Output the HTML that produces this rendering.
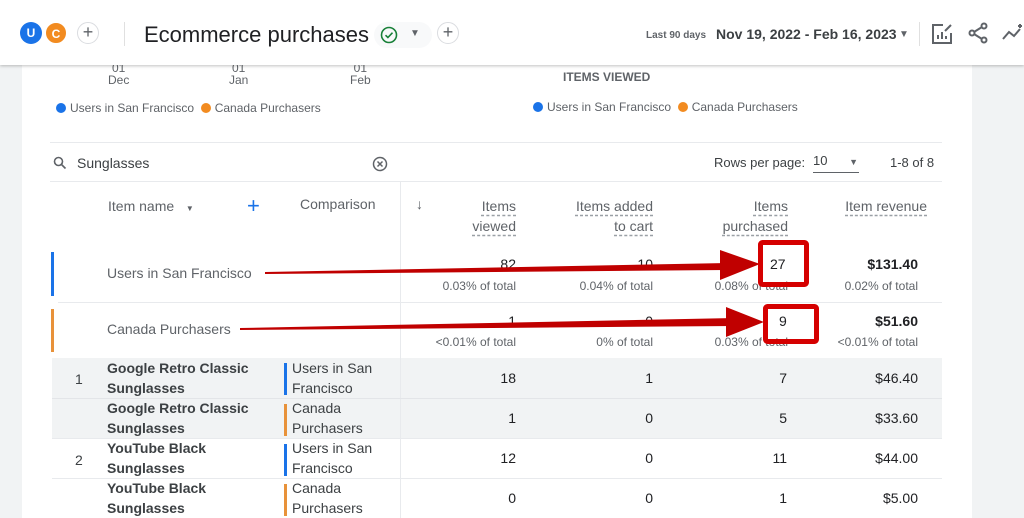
<!DOCTYPE html>
<html><head><meta charset="utf-8"><style>
*{margin:0;padding:0;box-sizing:border-box}
body{width:1024px;height:518px;overflow:hidden;background:#f1f3f4;font-family:"Liberation Sans",Arial,sans-serif;color:#3c4043;position:relative}
.abs{position:absolute}
#hdr{left:0;top:0;width:1024px;height:65px;background:#fff;box-shadow:0 1px 3px rgba(0,0,0,.25);z-index:5}
#card{left:22px;top:65px;width:950px;height:453px;background:#fff}
.t{position:absolute;white-space:nowrap}
.sm{font-size:12px;color:#5f6368}
.r{text-align:right}
.hl{position:absolute;height:1px;background:#e8eaed}
.dot{display:inline-block;width:10px;height:10px;border-radius:50%;vertical-align:-1px;margin-right:4px}
.bar{position:absolute;width:3px}
.b{font-weight:bold;color:#3c4043;font-size:14px;line-height:20px}
.c{font-size:14px;line-height:20px;color:#3c4043}
.n{font-size:14px;color:#202124;text-align:right;width:80px}
.u{text-decoration:underline dashed #9aa0a6;text-underline-offset:4px}
</style></head><body>
<div id="hdr" class="abs">
 <div class="abs" style="left:20px;top:22px;width:22px;height:22px;border-radius:50%;background:#1a73e8;color:#fff;font-size:12px;font-weight:bold;text-align:center;line-height:22px">U</div>
 <div class="abs" style="left:45px;top:22px;width:22px;height:22px;border-radius:50%;background:#f28b20;color:#fff;font-size:12px;font-weight:bold;text-align:center;line-height:22px;border:1px solid #fff">C</div>
 <div class="abs" style="left:77px;top:22px;width:22px;height:22px;border-radius:50%;border:1px solid #dadce0;text-align:center;line-height:19px;font-size:18px;color:#5f6368">+</div>
 <div class="abs" style="left:124px;top:22px;width:1px;height:24px;background:#e0e0e0"></div>
 <div class="t" style="left:144px;top:22px;font-size:22px;color:#202124">Ecommerce purchases</div>
 <div class="abs" style="left:374px;top:22px;width:58px;height:26px;border-radius:13px;background:#f8f9fa"></div>
 <svg class="abs" style="left:380px;top:26px" width="18" height="18" viewBox="0 0 18 18"><circle cx="9" cy="9" r="7.5" fill="none" stroke="#188038" stroke-width="1.6"/><path d="M5.5 9.2l2.4 2.3 4.6-4.8" fill="none" stroke="#188038" stroke-width="1.6"/></svg>
 <div class="t" style="left:410px;top:28px;font-size:10px;color:#5f6368">▼</div>
 <div class="abs" style="left:437px;top:22px;width:22px;height:22px;border-radius:50%;border:1px solid #dadce0;text-align:center;line-height:19px;font-size:18px;color:#5f6368">+</div>
 <div class="t" style="left:646px;top:30px;font-size:10px;color:#5f6368;font-weight:bold">Last 90 days</div>
 <div class="t" style="left:716px;top:26px;font-size:14px;color:#3c4043;font-weight:bold">Nov 19, 2022 - Feb 16, 2023</div>
 <div class="t" style="left:899px;top:29px;font-size:10px;color:#5f6368">▼</div>
 <div class="abs" style="left:919px;top:22px;width:1px;height:24px;background:#e0e0e0"></div>
 <svg class="abs" style="left:931px;top:23px" width="22" height="22" viewBox="0 0 22 22" fill="none" stroke="#5f6368" stroke-width="2"><path d="M12 2H2v18h18V10"/><path d="M7 16v-4M11 16V9M15 16v-3"/><path d="M14 8l6-6"/></svg>
 <svg class="abs" style="left:967px;top:22px" width="22" height="22" viewBox="0 0 22 22" fill="none" stroke="#5f6368" stroke-width="2"><circle cx="17" cy="4" r="2.5"/><circle cx="5" cy="11" r="2.5"/><circle cx="17" cy="18" r="2.5"/><path d="M7 10l8-5M7 12l8 5"/></svg>
 <svg class="abs" style="left:1002px;top:22px" width="22" height="22" viewBox="0 0 22 22" fill="none" stroke="#5f6368" stroke-width="2"><path d="M1 17l6-7 5 4 6-7"/><path d="M18 2v4M16 4h4"/></svg>
</div>
<div id="card" class="abs"></div>
<div class="t sm" style="left:108px;top:62px;line-height:12px;text-align:center">01<br>Dec</div>
<div class="t sm" style="left:229px;top:62px;line-height:12px;text-align:center">01<br>Jan</div>
<div class="t sm" style="left:350px;top:62px;line-height:12px;text-align:center">01<br>Feb</div>
<div class="t" style="left:563px;top:70px;font-size:12px;font-weight:bold;color:#5f6368">ITEMS VIEWED</div>
<div class="t sm" style="left:56px;top:101px"><span class="dot" style="background:#1a73e8"></span>Users in San Francisco &nbsp;<span class="dot" style="background:#f28b20"></span>Canada Purchasers</div>
<div class="t sm" style="left:533px;top:100px"><span class="dot" style="background:#1a73e8"></span>Users in San Francisco &nbsp;<span class="dot" style="background:#f28b20"></span>Canada Purchasers</div>
<div class="hl" style="left:50px;top:142px;width:892px"></div>
<svg class="abs" style="left:53px;top:156px" width="14" height="14" viewBox="0 0 14 14" fill="none" stroke="#5f6368" stroke-width="1.6"><circle cx="5.5" cy="5.5" r="4"/><path d="M8.5 8.5l4 4"/></svg>
<div class="t" style="left:77px;top:155px;font-size:14px;color:#3c4043">Sunglasses</div>
<svg class="abs" style="left:372px;top:156px" width="16" height="16" viewBox="0 0 16 16" fill="none" stroke="#5f6368" stroke-width="1.5"><circle cx="8" cy="8" r="6.5"/><path d="M5.5 5.5l5 5M10.5 5.5l-5 5"/></svg>
<div class="t" style="left:714px;top:155px;font-size:13px;color:#3c4043">Rows per page:</div>
<div class="t" style="left:813px;top:153px;font-size:13px;color:#3c4043;width:46px;border-bottom:1px solid #5f6368;height:20px">10 <span style="font-size:9px;margin-left:18px;color:#5f6368">▼</span></div>
<div class="t" style="left:890px;top:155px;font-size:13px;color:#3c4043">1-8 of 8</div>
<div class="hl" style="left:50px;top:181px;width:892px"></div>
<div class="abs" style="left:400px;top:181px;width:1px;height:337px;background:#e8eaed"></div>
<div class="t" style="left:108px;top:198px;font-size:14px;color:#5f6368">Item name &nbsp; <span style="font-size:8px">▼</span></div>
<div class="t" style="left:247px;top:193px;font-size:22px;color:#1a73e8">+</div>
<div class="t" style="left:300px;top:196px;font-size:14px;color:#5f6368">Comparison</div>
<div class="t" style="left:416px;top:196px;font-size:14px;color:#5f6368">↓</div>
<div class="t r" style="left:436px;top:196px;width:80px;font-size:14px;line-height:20px;color:#5f6368"><span class="u">Items</span><br><span class="u">viewed</span></div>
<div class="t r" style="left:553px;top:196px;width:100px;font-size:14px;line-height:20px;color:#5f6368"><span class="u">Items added</span><br><span class="u">to cart</span></div>
<div class="t r" style="left:688px;top:196px;width:100px;font-size:14px;line-height:20px;color:#5f6368"><span class="u">Items</span><br><span class="u">purchased</span></div>
<div class="t r" style="left:800px;top:196px;width:127px;font-size:14px;line-height:20px;color:#5f6368"><span class="u">Item revenue</span></div>
<div class="bar" style="left:51px;top:252px;height:44px;background:#1a73e8"></div>
<div class="t" style="left:107px;top:265px;font-size:14px;color:#5f6368">Users in San Francisco</div>
<div class="t n" style="left:436px;top:256px">82</div><div class="t n" style="left:573px;top:256px">10</div><div class="t n" style="left:838px;top:256px;font-weight:bold">$131.40</div>
<div class="t sm r" style="left:416px;top:279px;width:100px">0.03% of total</div><div class="t sm r" style="left:553px;top:279px;width:100px">0.04% of total</div><div class="t sm r" style="left:688px;top:279px;width:100px">0.08% of total</div><div class="t sm r" style="left:818px;top:279px;width:100px">0.02% of total</div>
<div class="hl" style="left:58px;top:302px;width:884px"></div>
<div class="bar" style="left:51px;top:309px;height:43px;background:#e8923a"></div>
<div class="t" style="left:107px;top:321px;font-size:14px;color:#5f6368">Canada Purchasers</div>
<div class="t n" style="left:436px;top:313px">1</div><div class="t n" style="left:573px;top:313px">0</div><div class="t n" style="left:838px;top:313px;font-weight:bold">$51.60</div>
<div class="t sm r" style="left:416px;top:335px;width:100px">&lt;0.01% of total</div><div class="t sm r" style="left:553px;top:335px;width:100px">0% of total</div><div class="t sm r" style="left:688px;top:335px;width:100px">0.03% of total</div><div class="t sm r" style="left:818px;top:335px;width:100px">&lt;0.01% of total</div>
<div class="abs" style="left:52px;top:358px;width:890px;height:80px;background:#f1f3f4"></div>
<div class="abs" style="left:400px;top:358px;width:1px;height:160px;background:#e8eaed"></div>
<div class="hl" style="left:52px;top:398px;width:890px;background:#e3e5e8"></div>
<div class="hl" style="left:52px;top:438px;width:890px"></div>
<div class="hl" style="left:52px;top:478px;width:890px"></div>
<div class="t c" style="left:75px;top:369px">1</div>
<div class="t c" style="left:75px;top:450px">2</div>
<div class="t b" style="left:107px;top:358px">Google Retro Classic<br>Sunglasses</div>
<div class="t b" style="left:107px;top:398px">Google Retro Classic<br>Sunglasses</div>
<div class="t b" style="left:107px;top:438px">YouTube Black<br>Sunglasses</div>
<div class="t b" style="left:107px;top:478px">YouTube Black<br>Sunglasses</div>
<div class="bar" style="left:284px;top:363px;height:32px;background:#1a73e8"></div>
<div class="bar" style="left:284px;top:404px;height:32px;background:#e8923a"></div>
<div class="bar" style="left:284px;top:444px;height:32px;background:#1a73e8"></div>
<div class="bar" style="left:284px;top:484px;height:32px;background:#e8923a"></div>
<div class="t c" style="left:292px;top:358px">Users in San<br>Francisco</div>
<div class="t c" style="left:292px;top:398px">Canada<br>Purchasers</div>
<div class="t c" style="left:292px;top:438px">Users in San<br>Francisco</div>
<div class="t c" style="left:292px;top:478px">Canada<br>Purchasers</div>
<div class="t n" style="left:436px;top:370px">18</div><div class="t n" style="left:573px;top:370px">1</div><div class="t n" style="left:707px;top:370px">7</div><div class="t n" style="left:838px;top:370px">$46.40</div>
<div class="t n" style="left:436px;top:410px">1</div><div class="t n" style="left:573px;top:410px">0</div><div class="t n" style="left:707px;top:410px">5</div><div class="t n" style="left:838px;top:410px">$33.60</div>
<div class="t n" style="left:436px;top:450px">12</div><div class="t n" style="left:573px;top:450px">0</div><div class="t n" style="left:707px;top:450px">11</div><div class="t n" style="left:838px;top:450px">$44.00</div>
<div class="t n" style="left:436px;top:490px">0</div><div class="t n" style="left:573px;top:490px">0</div><div class="t n" style="left:707px;top:490px">1</div><div class="t n" style="left:838px;top:490px">$5.00</div>
<svg class="abs" style="left:0;top:0" width="1024" height="518">
 <path d="M265 272 L728 263 L728 270 L265 274 Z" fill="#c00000"/>
 <path d="M720 250 L760 264 L720 280 Z" fill="#c00000"/>
 <path d="M240 328 L735 318 L735 326 L240 330 Z" fill="#c00000"/>
 <path d="M726 307 L764 322 L726 337 Z" fill="#c00000"/>
 <rect x="760.5" y="242.5" width="46" height="42" fill="none" stroke="#d50000" stroke-width="5" rx="2"/>
 <rect x="765.5" y="306.5" width="51" height="35" fill="none" stroke="#d50000" stroke-width="5" rx="2"/>
</svg>
<div class="t" style="left:770px;top:256px;font-size:14px;color:#202124">27</div><div class="t" style="left:779px;top:313px;font-size:14px;color:#202124">9</div>
</body></html>
